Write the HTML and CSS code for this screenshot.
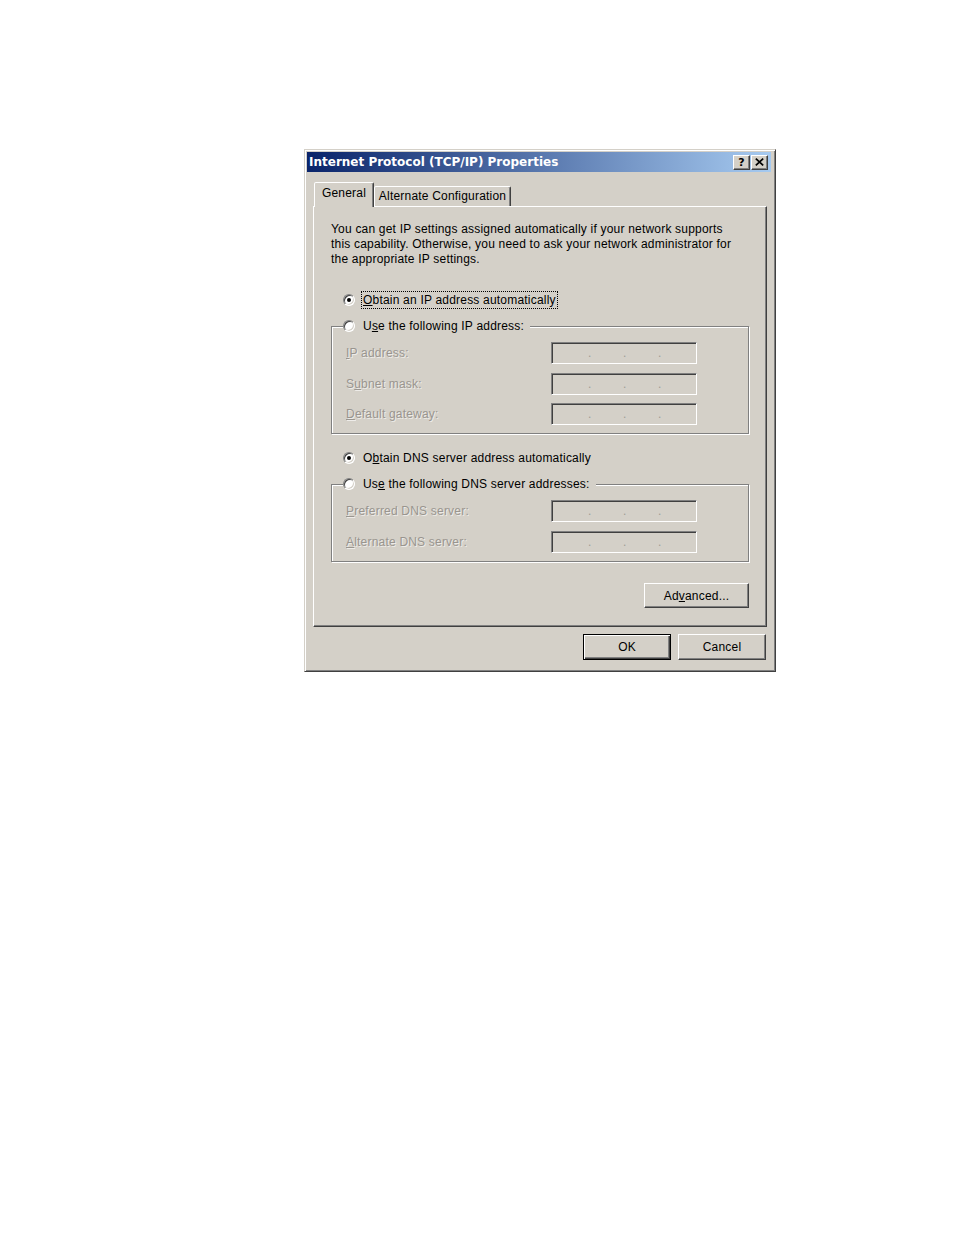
FILE: index.html
```html
<!DOCTYPE html>
<html>
<head>
<meta charset="utf-8">
<title>Internet Protocol (TCP/IP) Properties</title>
<link rel="stylesheet" href="styles.css">
</head>
<body>
<div class="page">
  <div class="window">
    <div class="titlebar">
      <span class="title">Internet Protocol (TCP/IP) Properties</span>
      <div class="title-buttons">
        <span class="tbtn help">?</span>
        <span class="tbtn close"><svg width="9" height="8" viewBox="0 0 9 8"><path d="M0.8 0.6 L8.2 7.4 M8.2 0.6 L0.8 7.4" stroke="#000" stroke-width="1.7" fill="none"/></svg></span>
      </div>
    </div>
    <div class="body">
      <div class="tabs">
        <div class="tab active">General</div>
        <div class="tab">Alternate Configuration</div>
      </div>
      <div class="panel">
        <p class="intro">You can get IP settings assigned automatically if your network supports<br>this capability. Otherwise, you need to ask your network administrator for<br>the appropriate IP settings.</p>

        <div class="option first">
          <span class="radio checked"></span>
          <span class="label focus"><u>O</u>btain an IP address automatically</span>
        </div>

        <fieldset class="group">
          <legend class="legend">
            <span class="radio"></span>
            <span class="label">U<u>s</u>e the following IP address:</span>
          </legend>
          <div class="field">
            <span class="flabel"><u>I</u>P address:</span>
            <span class="ipbox"><span>.</span><span>.</span><span>.</span></span>
          </div>
          <div class="field">
            <span class="flabel">S<u>u</u>bnet mask:</span>
            <span class="ipbox"><span>.</span><span>.</span><span>.</span></span>
          </div>
          <div class="field">
            <span class="flabel"><u>D</u>efault gateway:</span>
            <span class="ipbox"><span>.</span><span>.</span><span>.</span></span>
          </div>
        </fieldset>

        <div class="option second">
          <span class="radio checked"></span>
          <span class="label">O<u>b</u>tain DNS server address automatically</span>
        </div>

        <fieldset class="group dns">
          <legend class="legend">
            <span class="radio"></span>
            <span class="label">Us<u>e</u> the following DNS server addresses:</span>
          </legend>
          <div class="field">
            <span class="flabel"><u>P</u>referred DNS server:</span>
            <span class="ipbox"><span>.</span><span>.</span><span>.</span></span>
          </div>
          <div class="field">
            <span class="flabel"><u>A</u>lternate DNS server:</span>
            <span class="ipbox"><span>.</span><span>.</span><span>.</span></span>
          </div>
        </fieldset>

        <div class="adv-row">
          <button class="btn adv">Ad<u>v</u>anced...</button>
        </div>
      </div>
      <div class="actions">
        <button class="btn default">OK</button>
        <button class="btn">Cancel</button>
      </div>
    </div>
  </div>
</div>
</body>
</html>
```
FILE: styles.css
```css
body {
  margin: 0;
  background: #fff;
  font-family: "Liberation Sans", Arial, sans-serif;
  font-size: 12px;
  letter-spacing: 0.2px;
  color: #000;
}

.page {
  padding: 149px 0 0 304px;
}

.window {
  box-sizing: border-box;
  width: 472px;
  height: 523px;
  background: #d4d0c8;
  border: 1px solid;
  border-color: #d4d0c8 #404040 #404040 #d4d0c8;
  box-shadow: inset 1px 1px #fff, inset -1px -1px #808080;
  padding: 2px;
  display: flex;
  flex-direction: column;
}

.titlebar {
  height: 20px;
  margin-right: 2px;
  background: linear-gradient(to right, #0a246a, #a6caf0);
  display: flex;
  align-items: center;
  justify-content: space-between;
  padding: 0 3px 0 2px;
}

.title {
  color: #fff;
  font-family: "DejaVu Sans", Verdana, sans-serif;
  font-weight: bold;
  font-size: 12px;
  letter-spacing: 0;
  white-space: nowrap;
}

.title-buttons {
  display: flex;
  gap: 1px;
}

.tbtn {
  box-sizing: border-box;
  width: 17px;
  height: 15px;
  background: #d4d0c8;
  border: 1px solid;
  border-color: #fff #404040 #404040 #fff;
  box-shadow: inset -1px -1px #808080;
  display: flex;
  align-items: center;
  justify-content: center;
}

.tbtn.help {
  font-family: "DejaVu Sans", Verdana, sans-serif;
  font-weight: bold;
  font-size: 11px;
  line-height: 11px;
  letter-spacing: 0;
}

.body {
  padding: 10px 6px 0;
}

.tabs {
  display: flex;
  align-items: flex-end;
  height: 24px;
  padding-left: 1px;
}

.tab {
  box-sizing: border-box;
  width: 137px;
  height: 20px;
  background: #d4d0c8;
  border: 1px solid;
  border-bottom: none;
  border-color: #fff #404040 transparent #fff;
  box-shadow: inset -1px 0 #808080;
  border-radius: 2px 2px 0 0;
  text-align: center;
  line-height: 18px;
  white-space: nowrap;
}

.tab.active {
  width: 60px;
  height: 25px;
  line-height: 20px;
  margin-bottom: -1px;
  position: relative;
  z-index: 1;
}

.panel {
  box-sizing: border-box;
  height: 421px;
  border: 1px solid;
  border-color: #fff #404040 #404040 #fff;
  box-shadow: inset -1px -1px #808080;
  padding: 15px 17px 0 17px;
}

.intro {
  margin: 0;
  line-height: 15px;
  white-space: nowrap;
}

.option {
  display: flex;
  align-items: center;
  height: 18px;
  margin-left: 12px;
  gap: 6px;
}

.option.first {
  margin-top: 24px;
}

.option.second {
  margin-top: 15px;
}

.radio {
  box-sizing: border-box;
  flex: none;
  width: 12px;
  height: 12px;
  border: 1px solid;
  border-color: #808080 #fff #fff #808080;
  border-radius: 50%;
  background: #fff;
  box-shadow: inset 1px 1px #404040, inset -1px -1px #d4d0c8;
  display: inline-flex;
  align-items: center;
  justify-content: center;
}

.radio.checked::after {
  content: "";
  width: 4px;
  height: 4px;
  border-radius: 50%;
  background: #000;
}

.label {
  box-sizing: border-box;
  height: 18px;
  line-height: 16px;
  padding: 0 1px;
  border: 1px solid transparent;
  white-space: nowrap;
}

.label.focus {
  border: 1px dotted #000;
}

.group {
  margin: 8px 0 0;
  padding: 7px 10px 8px 11px;
  border: 1px solid #808080;
  box-shadow: inset 1px 1px #fff, 1px 1px #fff;
  min-width: 0;
}

.legend {
  display: flex;
  align-items: center;
  gap: 6px;
  height: 18px;
  padding: 0 4px 0 0;
  background: #d4d0c8;
}

.field {
  display: flex;
  align-items: center;
  height: 22px;
  padding-left: 3px;
}

.field + .field {
  margin-top: 8.5px;
}

.dns .field + .field {
  margin-top: 9px;
}

.flabel {
  width: 205px;
  color: #99958f;
  text-shadow: 1px 1px rgba(255, 255, 255, 0.6);
  white-space: nowrap;
}

.ipbox {
  box-sizing: border-box;
  width: 146px;
  height: 22px;
  border: 1px solid;
  border-color: #808080 #fff #fff #808080;
  box-shadow: inset 1px 1px #404040, inset -1px -1px #d4d0c8;
  display: flex;
  padding: 1px 0 0 36px;
  line-height: 18px;
  color: #a09c96;
  letter-spacing: 0;
}

.ipbox span {
  width: 35px;
}

.adv-row {
  display: flex;
  justify-content: flex-end;
  margin-top: 21px;
}

.btn {
  box-sizing: border-box;
  height: 26px;
  width: 88px;
  padding: 0;
  background: #d4d0c8;
  border: 1px solid;
  border-color: #fff #404040 #404040 #fff;
  box-shadow: inset -1px -1px #808080;
  font-family: "Liberation Sans", Arial, sans-serif;
  font-size: 12px;
  letter-spacing: 0.2px;
  color: #000;
  text-align: center;
}

.btn.adv {
  width: 105px;
  height: 25px;
}

.btn.default {
  border: 1px solid #000;
  box-shadow: inset 1px 1px #fff, inset -1px -1px #404040, inset -2px -2px #808080;
}

.actions {
  display: flex;
  justify-content: flex-end;
  gap: 7px;
  margin-top: 7px;
  padding-right: 1px;
}
```
